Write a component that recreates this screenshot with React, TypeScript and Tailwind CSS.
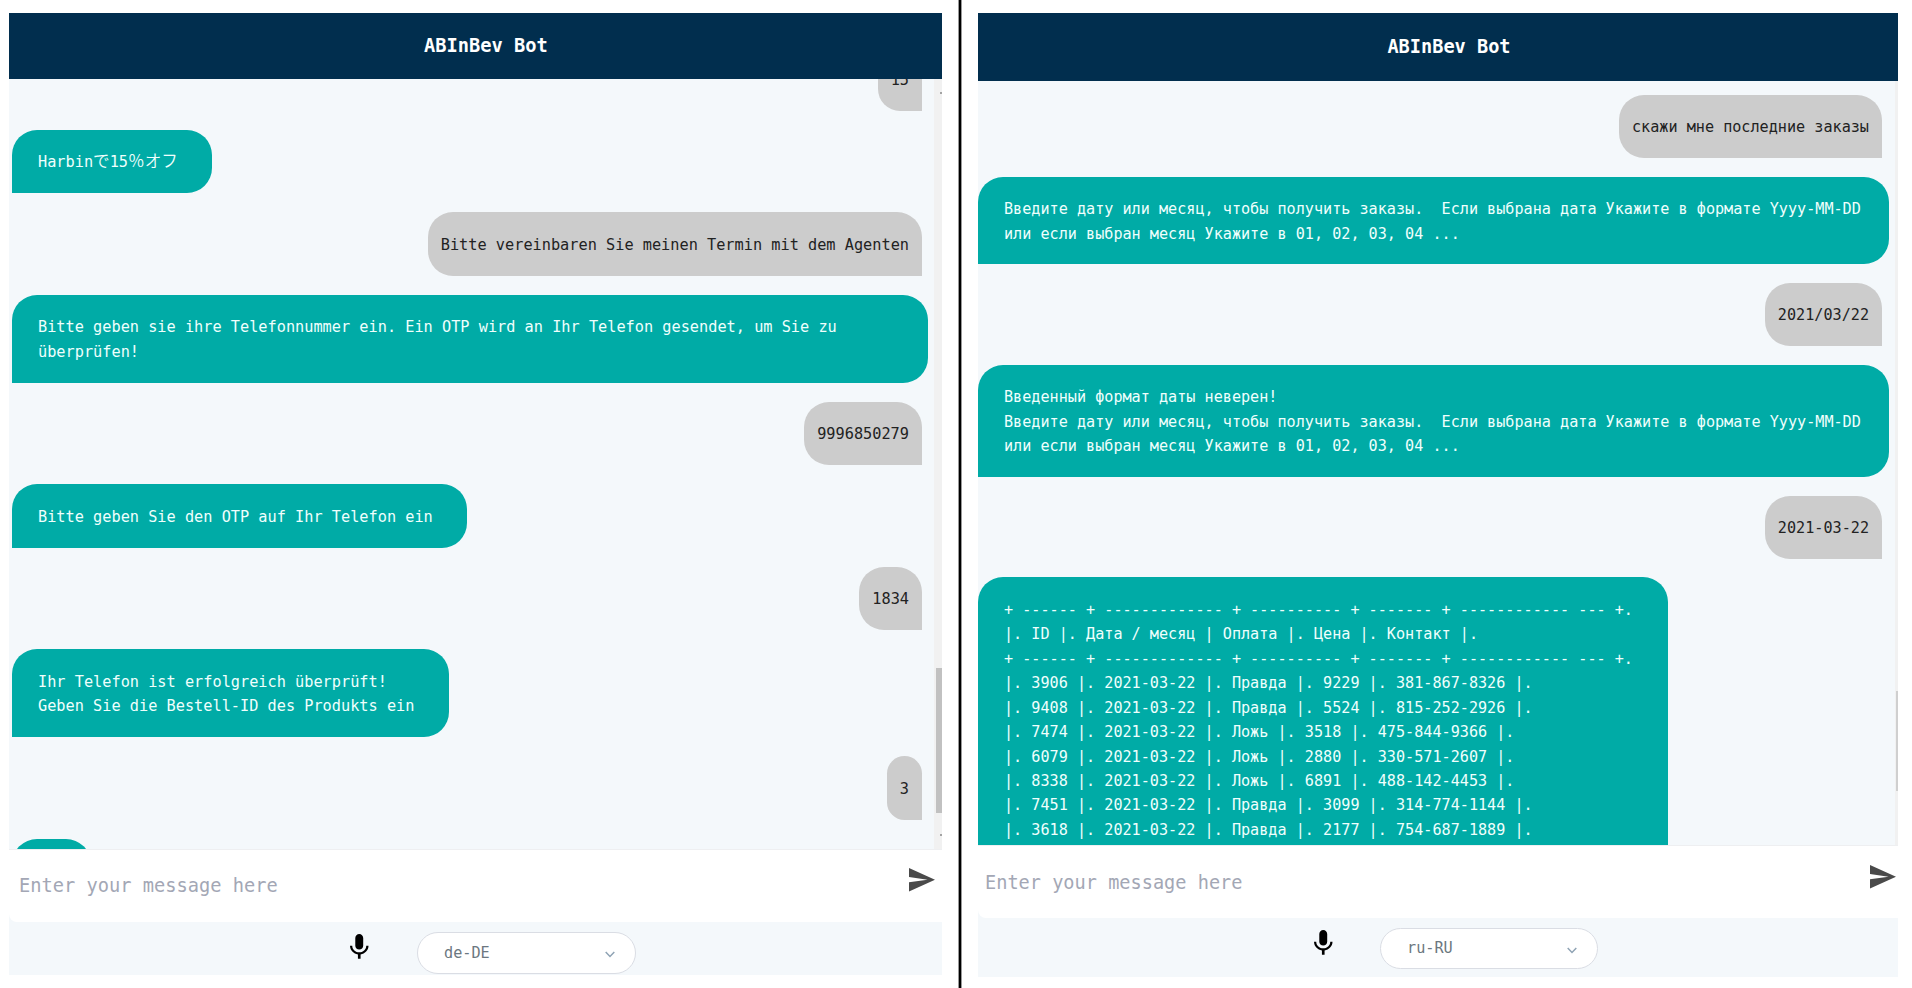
import React from "react";

type Message = { from: "bot" | "user"; text: React.ReactNode; wide?: boolean };

type PanelStyle = {
  root: string;
  header: string;
  title: string;
  feed: string;
  list: string;
  bot: string;
  user: string;
  track: string;
  thumb: string;
  arrowTop: string;
  arrowBottom: string;
  composer: string;
  placeholder: string;
  send: string;
  footer: string;
  mic: string;
  select: string;
};

const german: Message[] = [
  { from: "user", text: "15" },
  {
    from: "bot",
    text: (
      <>
        Harbin<Cjk>で</Cjk>15<Cjk>％オフ</Cjk>
      </>
    ),
  },
  { from: "user", text: "Bitte vereinbaren Sie meinen Termin mit dem Agenten" },
  {
    from: "bot",
    wide: true,
    text: "Bitte geben sie ihre Telefonnummer ein. Ein OTP wird an Ihr Telefon gesendet, um Sie zu\nüberprüfen!",
  },
  { from: "user", text: "9996850279" },
  { from: "bot", text: "Bitte geben Sie den OTP auf Ihr Telefon ein" },
  { from: "user", text: "1834" },
  { from: "bot", text: "Ihr Telefon ist erfolgreich überprüft!\nGeben Sie die Bestell-ID des Produkts ein" },
  { from: "user", text: "3" },
  { from: "bot", text: "  " },
];

const askDate =
  "Введите дату или месяц, чтобы получить заказы.  Если выбрана дата Укажите в формате Yyyy-MM-DD\nили если выбран месяц Укажите в 01, 02, 03, 04 ...";

const orders = [
  "+ ------ + ------------- + ---------- + ------- + ------------ --- +.",
  "|. ID |. Дата / месяц | Оплата |. Цена |. Контакт |.",
  "+ ------ + ------------- + ---------- + ------- + ------------ --- +.",
  "|. 3906 |. 2021-03-22 |. Правда |. 9229 |. 381-867-8326 |.",
  "|. 9408 |. 2021-03-22 |. Правда |. 5524 |. 815-252-2926 |.",
  "|. 7474 |. 2021-03-22 |. Ложь |. 3518 |. 475-844-9366 |.",
  "|. 6079 |. 2021-03-22 |. Ложь |. 2880 |. 330-571-2607 |.",
  "|. 8338 |. 2021-03-22 |. Ложь |. 6891 |. 488-142-4453 |.",
  "|. 7451 |. 2021-03-22 |. Правда |. 3099 |. 314-774-1144 |.",
  "|. 3618 |. 2021-03-22 |. Правда |. 2177 |. 754-687-1889 |.",
  " ",
  " ",
].join("\n");

const russian: Message[] = [
  { from: "user", text: "скажи мне последние заказы" },
  { from: "bot", wide: true, text: askDate },
  { from: "user", text: "2021/03/22" },
  { from: "bot", wide: true, text: "Введенный формат даты неверен!\n" + askDate },
  { from: "user", text: "2021-03-22" },
  { from: "bot", text: orders },
];

const leftStyle: PanelStyle = {
  root: "ml-[9px] w-[933px]",
  header: "h-[66.5px]",
  title: "text-[18.7px] pl-[21px]",
  feed: "h-[770.5px]",
  list: "-mt-[31.5px] gap-[18.95px] pl-[3px] pr-[6px] text-[15.25px] leading-[24.7px]",
  bot: "pt-[20.3px] pb-[18.5px] pl-[26px] pr-[34.6px]",
  user: "mr-[6px] pt-[20.2px] pb-[18.6px] px-[13px]",
  track: "w-[8px] pl-[2px] pt-[13px]",
  thumb: "mt-[574px] h-[145px] bg-[#c1c1c1]",
  arrowTop: "ml-auto h-[2px] w-[2px] bg-[#a3a3a3]",
  arrowBottom: "ml-auto mt-[21px] h-[2px] w-[2px] bg-[#a3a3a3]",
  composer: "h-[72px] pl-[10px] pr-[7px]",
  placeholder: "text-[18.7px] mt-[1px]",
  send: "h-[23.4px] w-[26px] mb-[11px]",
  footer: "h-[53px] pl-[341px]",
  mic: "mt-[12.5px] mr-[48px] h-[24.7px] w-[18.5px]",
  select: "mt-[10px] h-[42px] w-[219px] pl-[26.5px] pr-[20px]",
};

const rightStyle: PanelStyle = {
  root: "ml-[16px] w-[920px]",
  header: "h-[68px]",
  title: "text-[18.6px] pl-[22px]",
  feed: "h-[765px]",
  list: "pt-[14.5px] gap-[18.8px] pr-[6.5px] text-[15.15px] leading-[24.43px]",
  bot: "pt-[20.5px] pb-[18.1px] pl-[26px] pr-[35px]",
  user: "mr-[6.5px] pt-[20.4px] pb-[18.2px] px-[13px]",
  track: "w-[3px] pl-[1px] pt-[610px]",
  thumb: "h-[100px] bg-[#cfcfcf]",
  arrowTop: "hidden",
  arrowBottom: "hidden",
  composer: "h-[72px] pl-[7px] pr-[2px]",
  placeholder: "text-[18.6px] mt-[2px]",
  send: "h-[23.4px] w-[26px] mb-[9px]",
  footer: "h-[59px] pl-[336px]",
  mic: "mt-[12.5px] mr-[47.5px] h-[24.7px] w-[18.5px]",
  select: "mt-[10px] h-[41px] w-[218px] pl-[26px] pr-[20.5px]",
};

function Cjk({ children }: { children: React.ReactNode }) {
  return (
    <span className="font-[Noto_Sans_CJK_JP,sans-serif] text-[16.6px] leading-none font-[350]">{children}</span>
  );
}

function Bubble({ message, look }: { message: Message; look: PanelStyle }) {
  if (message.from === "user") {
    return (
      <div className={`self-end rounded-[25px] rounded-br-none bg-[#cccccc] whitespace-pre text-[#222] ${look.user}`}>
        {message.text}
      </div>
    );
  }
  return (
    <div
      className={`rounded-[25px] rounded-bl-none bg-[#00aba6] whitespace-pre text-[#effffd] ${look.bot} ${
        message.wide ? "self-stretch" : "self-start"
      }`}
    >
      {message.text}
    </div>
  );
}

function ChatPanel({ messages, language, look }: { messages: Message[]; language: string; look: PanelStyle }) {
  return (
    <section className={`shrink-0 ${look.root}`}>
      <header className={`flex items-center justify-center bg-[#012e4e] font-bold text-white ${look.header}`}>
        <h1 className={look.title}>ABInBev Bot</h1>
      </header>
      <div className={`flex overflow-hidden border-b border-[#eeeff1] bg-[#f4f8fb] ${look.feed}`}>
        <div className={`flex min-w-0 flex-1 flex-col *:shrink-0 ${look.list}`}>
          {messages.map((message, i) => (
            <Bubble key={i} message={message} look={look} />
          ))}
        </div>
        <div className={`shrink-0 bg-[#f1f1f1] ${look.track}`}>
          <div className={look.arrowTop} />
          <div className={look.thumb} />
          <div className={look.arrowBottom} />
        </div>
      </div>
      <div className="bg-[#f4f8fb]">
        <div className={`flex items-center justify-between rounded-bl-lg bg-white ${look.composer}`}>
          <span className={`text-[#a3a7b5] ${look.placeholder}`}>Enter your message here</span>
          <svg viewBox="2 3 21 18" preserveAspectRatio="none" className={`fill-[#4a4a4a] ${look.send}`}>
            <path d="M2.01 21 23 12 2.01 3 2 10l15 2-15 2z" />
          </svg>
        </div>
      </div>
      <footer className={`flex items-start bg-[#f4f8fb] ${look.footer}`}>
        <svg viewBox="5 2 14 19" preserveAspectRatio="none" className={`shrink-0 fill-black ${look.mic}`}>
          <path d="M12 14c1.66 0 2.99-1.34 2.99-3L15 5c0-1.66-1.34-3-3-3S9 3.34 9 5v6c0 1.66 1.34 3 3 3zm5.3-3c0 3-2.54 5.1-5.3 5.1S6.7 14 6.7 11H5c0 3.41 2.72 6.23 6 6.72V21h2v-3.28c3.28-.48 6-3.3 6-6.72h-1.7z" />
        </svg>
        <div
          className={`flex items-center justify-between rounded-full border border-[#dadde4] bg-white text-[15.2px] text-[#6c7780] ${look.select}`}
        >
          <span className="mt-[1px]">{language}</span>
          <svg viewBox="0 0 10 7" className="mt-[4px] h-[7px] w-[10px] fill-none stroke-[#8fa3b4] stroke-[1.5]">
            <path d="M.7 1 5 5.4 9.3 1" />
          </svg>
        </div>
      </footer>
    </section>
  );
}

export default function App() {
  return (
    <main className="flex h-[988px] w-[1912px] overflow-hidden bg-white font-[DejaVu_Sans_Mono,monospace]">
      <div className="flex pt-[12.5px]">
        <ChatPanel messages={german} language="de-DE" look={leftStyle} />
      </div>
      <div className="ml-[16px] w-[4px] shrink-0 border-x border-[#999] bg-black" />
      <div className="flex pt-[12.5px]">
        <ChatPanel messages={russian} language="ru-RU" look={rightStyle} />
      </div>
    </main>
  );
}
